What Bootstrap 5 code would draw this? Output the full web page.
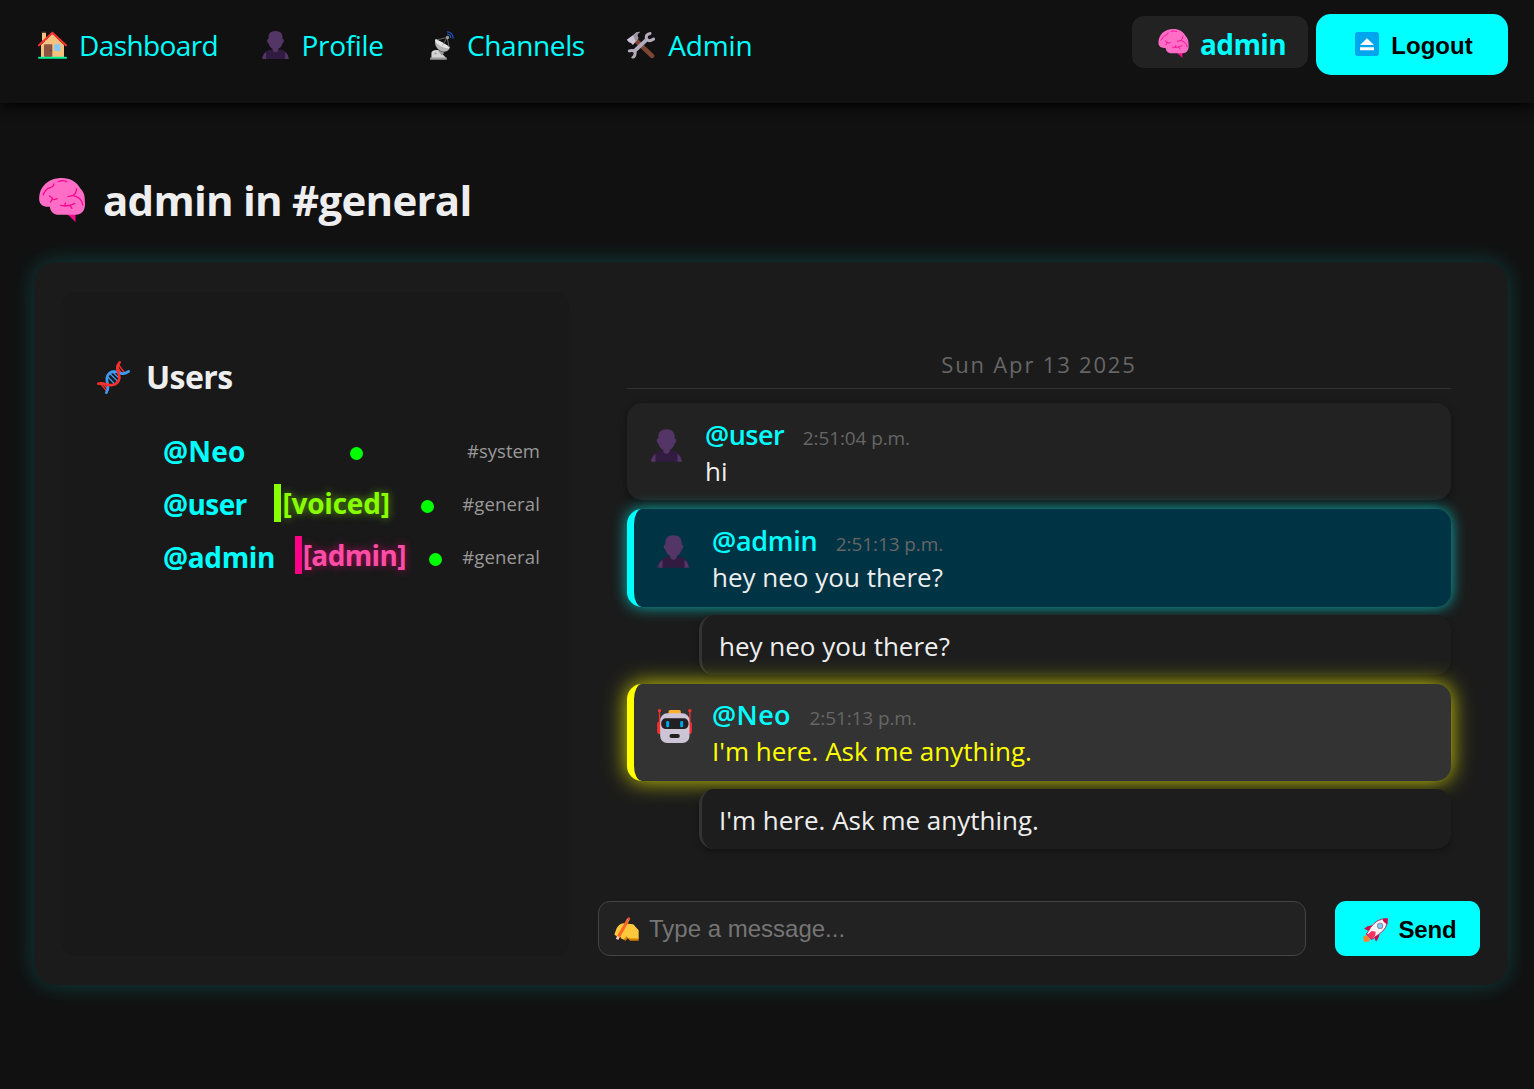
<!DOCTYPE html>
<html lang="en">
<head>
<meta charset="utf-8">
<title>#general</title>
<meta name="viewport" content="width=device-width, initial-scale=1">
<link href="https://cdn.jsdelivr.net/npm/bootstrap@5.3.0/dist/css/bootstrap.min.css" rel="stylesheet">
<style>
body{background:#111;color:#eee;font-family:"Open Sans","Noto Sans",sans-serif;min-height:1089px;overflow-x:hidden}
svg{display:block;flex:none;overflow:visible}
.topbar{height:103px;padding:14px 26px 0 38px;background:#111;box-shadow:0 3px 12px #000;position:relative}
.topnav{gap:42.5px;padding-top:11px}
.topnav a{color:#0ff;font-size:28px;line-height:40px;text-decoration:none;display:flex;white-space:nowrap}
.ico-slot{width:41px;flex:none;display:flex;padding-top:5.5px}
.t-dash{letter-spacing:-.6px}.t-prof{letter-spacing:-.36px}.t-chan{letter-spacing:-.38px}.t-adm{letter-spacing:-.16px}
.who{width:176px;height:52px;margin-top:2px;background:#222;border-radius:12px;padding:3px 0 0 26px;color:#0ff;font-weight:700;font-size:28px;letter-spacing:-.6px}
.who span{margin-left:11px}
.btn-cyan,.btn-cyan:hover{background:#0ff;color:#000;border:0;font:700 24px/28px "Liberation Sans",sans-serif;padding:2px 0 0 4px}
.btn-out{width:192px;height:61px;border-radius:15px}
.btn-send{width:145px;height:55px;border-radius:11px}
.btn-send span{margin-left:11px;letter-spacing:-.17px}
.room-title{font-size:42px;font-weight:700;line-height:60px;margin:66.500px 0 0;padding-left:39px;height:92.500px;letter-spacing:-.75px}
.room-title span{margin-left:18px}
.shell{margin:0 26px 0 34px;height:723px;background:#1b1b1b;border-radius:22px;padding:30px 28px 29px;box-shadow:0 0 22px rgba(0,255,255,.2)}
.people{width:507px;background:#191919;border-radius:15px;padding:59px 29px 0 35px}
.people h2{font-size:32px;line-height:52px;font-weight:700;margin:0 0 22px;letter-spacing:-.6px}
.person{height:52.7px;padding-left:66px;line-height:52px;font-size:28px;font-weight:700;color:#0ff}
.n-neo{letter-spacing:.2px}.n-user{letter-spacing:-.6px}.n-admin{letter-spacing:-.35px}
.dot{width:13px;height:13px;border-radius:50%;background:#0f0;margin-top:5px}
.chan{font-size:18.5px;font-weight:400;color:#999;letter-spacing:.15px}
.chan-sys{letter-spacing:0}
.role{line-height:38px;border-left:7px solid;padding-left:1px;margin:0 4px 3px 0}
.role-v{color:#8f0;border-color:#8f0;text-shadow:0 0 8px rgba(136,255,0,.6);letter-spacing:-.2px}
.role-a{color:#ff4da6;border-color:#f08;text-shadow:0 0 8px rgba(255,0,136,.6);letter-spacing:-.65px}
.chat{margin-left:29px;width:882px}
.feed{padding:51px 29px 0;height:609px}
.day{font-size:22px;line-height:42px;height:46px;text-align:center;color:#666;border-bottom:1px solid #333;margin-bottom:14px;letter-spacing:1.82px}
.msg{height:97px;border-radius:15px;background:#222;box-shadow:0 3px 8px rgba(0,0,0,.4);margin-bottom:9px;padding:13px 0 0 24px;font-size:26px}
.msg-me{background:#034;border-left:7px solid #0ff;box-shadow:0 0 15px #0ffa;height:98px;margin-bottom:8px}
.msg-bot{background:#333;border-left:7px solid #ff0;box-shadow:0 0 22px #ff0c;margin-bottom:8px;padding:12px 0 0 23px}
.msg-bot .said{color:#ff0}
.nick{color:#0ff;font-weight:600;font-size:27px;letter-spacing:-.5px}
.msg-me .nick{letter-spacing:-.3px}
.msg-bot .nick{letter-spacing:.4px}
.msg .av{width:54px;padding-top:13px;flex:none}
.msg-bot .av{width:55px}
.line{line-height:37px;height:37px;white-space:nowrap}
.time{font-size:19px;color:#666;margin-left:18.5px;letter-spacing:-.1px}
.echo{margin:0 0 9px 72px;height:60px;border-left:3px solid #333;border-radius:15px;background:#1d1d1d;box-shadow:0 3px 6px rgba(0,0,0,.3);padding:0 0 0 17px;font-size:26px;line-height:62px}
.compose{width:708px;height:55px;border:1px solid #444;border-radius:12px;background:#222;padding-left:15px}
.compose input{background:none;border:0;outline:0;color:#eee;font:24px "Liberation Sans",sans-serif;flex:1;padding:0;margin-left:10px}
.compose input::placeholder{color:#757575;opacity:1}
</style>
</head>
<body>
<svg width="0" height="0" class="position-absolute">
<symbol id="house" viewBox="0 0 87 82"><path fill="#f4c27f" d="M12 4h12v24H12zM43 7l35 34v37H9V41z"/><path fill="#5b4233" d="M11 1h13v4H11z"/><path fill="none" stroke="#f8312f" stroke-width="6" stroke-linecap="round" stroke-linejoin="round" d="M3 42L43 4l41 38"/><rect x="18" y="39" width="25" height="38" rx="3" fill="#8c5543"/><circle cx="38" cy="57" r="2" fill="#4a2a20"/><rect x="49" y="39" width="18" height="20" rx="2" fill="#83cbff"/><rect y="76" width="87" height="6" rx="3" fill="#00f397"/></symbol>
<symbol id="bust" viewBox="0 0 76 80"><path fill="#321b41" d="M0 80C2 62 12 54 28 53h20c16 1 26 9 28 27z"/><path fill="#533566" d="M0 80c1-9 5-16 11-20v20zM76 80c-1-9-5-16-11-20v20zM38 0C24 0 18 8 18 18v5c-6 0-5 10 0 12 2 8 6 13 12 16v3q2 7 8 7t8-7v-3c6-3 10-8 12-16 5-2 6-12 0-12v-5C58 8 52 0 38 0z"/></symbol>
<symbol id="dish" viewBox="0 0 70 85"><path fill="#d3d3d3" d="M4 80V64q3-8 13-8h8l23 24z"/><path fill="#999" d="M0 78h49v6H0zM22 56l20 8-8 8z"/><circle cx="16" cy="66" r="3" fill="#999"/><path fill="#b4b4b4" d="M17 23c-6 14 0 28 13 35 12 6 24 1 28-9z"/><path fill="#e6e6e6" d="M15 25c8 1 40 17 43 24-2 3-13 3-27-5-12-7-18-14-16-19z"/><path fill="none" stroke="#888" stroke-width="2" d="M20 26l30-7-14 24M50 19l6 29"/><circle cx="51" cy="19" r="5" fill="#999"/><path fill="none" stroke="#1a5fd0" stroke-width="3" d="M50 9q10 1 11 12M49 2q18 1 19 21"/></symbol>
<symbol id="tools" viewBox="0 0 87 82"><path stroke="#7d4533" stroke-width="14" stroke-linecap="round" d="M30 28l48 46"/><path fill="#cdc4d6" d="M1 25L24 8q7-8 18-7-9 6-9 12l4 7-17 21-5-5-7-3z"/><path fill="#9b93a5" d="M20 12l4-4q7-8 18-7-9 6-9 12l4 7-8 10z"/><path stroke="#b4acbc" stroke-width="12" d="M66 21L22 62"/><path fill="none" stroke="#b4acbc" stroke-width="9" stroke-linecap="round" d="M72 6q-14 3-11 15 5 13 22 2M9 59q15-4 18 6-1 11-7 14"/></symbol>
<symbol id="brain" viewBox="0 0 137 132"><path fill="#f70a8d" d="M84 108l25 24v-27z"/><path fill="#ff6dc6" d="M68 0c25 0 45 12 55 31 12 13 14 22 14 39 3 24-6 40-27 40H58c-13 0-24-8-26-24C13 88 0 80 0 63 0 25 28 0 68 0z"/><g fill="none" stroke="#f70a8d" stroke-width="4" stroke-linecap="round"><path d="M12 51q7-18 20-22 11-2 12-11M58 11q12-6 24 0M112 33q-1 15-11 19l-15 4M101 53q25 3 30 28M31 54l8 6q1 9 15 2M39 60q0 8-5 12M64 82l14 2 18-3 11-5M76 83l3-8M92 82l6 9"/></g></symbol>
<symbol id="eject" viewBox="0 0 24 24"><rect width="24" height="24" rx="3" fill="#00a6ed"/><path fill="#fff" d="M12 6.300l7 6.700H5zM5 15.300h14v3H5z"/></symbol>
<symbol id="dna" viewBox="0 0 99 99"><g fill="none" stroke-linecap="round" stroke-width="4"><path stroke="#f8312f" d="M17 69l14 13M10 68l19 22M65 12l18 24M63 20l12 20"/><path stroke="#3f9bf4" d="M33 48l20 21M39 38l25 25M47 33l21 20"/></g><g fill="none" stroke-linecap="round" stroke-width="8"><path stroke="#3f9bf4" d="M28 95C42 74 24 65 31 46c8-18 26-16 38-10 12 6 19 0 26-5"/><path stroke="#f8312f" d="M4 68c19-5 26 8 42 4 18-3 25-19 19-34-6-14-6-25 3-34"/></g></symbol>
<symbol id="robot" viewBox="0 0 104 102"><g fill="#f8312f"><circle cx="7" cy="5" r="5"/><circle cx="98" cy="5" r="5"/><path d="M5 5h4v40H5zM96 5h4v40h-4z"/><rect y="38" width="15" height="37" rx="6"/><rect x="89" y="38" width="15" height="37" rx="6"/></g><rect x="34" y="3" width="37" height="20" rx="5" fill="#ffb02e"/><rect x="9" y="13" width="88" height="89" rx="21" fill="#cdc4d6"/><rect x="12" y="28" width="82" height="32" rx="14" fill="#212121"/><rect x="27" y="36" width="9" height="19" rx="4" fill="#00a6ed"/><rect x="69" y="36" width="9" height="19" rx="4" fill="#00a6ed"/><rect x="37" y="75" width="31" height="12" rx="6" fill="#212121"/></symbol>
<symbol id="hand" viewBox="0 0 73 70"><path fill="#d67d00" d="M20 55l6 11 8 3 6-7 7 7h25V60z"/><path fill="#ffc83d" d="M1 51L8 32q8-14 22-14l12 2 14 1 16 18v24H48q-8-1-12-7-2 6-9 9-7-1-8-7l-8 1z"/><path stroke="#ff6723" stroke-width="9" d="M13 58L40 10"/><path stroke="#ffc9b8" stroke-width="8" d="M9 65l4-8M40 10l2-4"/><path stroke="#e34b35" stroke-width="9" stroke-linecap="round" d="M43 5v0"/></symbol>
<symbol id="rocket" viewBox="0 0 73 70"><path fill="#ca0b4a" d="M3 31q10-10 24-9l-6 18zM30 50l18-9q2 13-10 28zM14 42l18 17-7 5L8 47z"/><path fill="#ff822d" d="M1 54q6-5 13-1l5 6q2 5-2 10H2z"/><path fill="#f4f4f4" stroke="#ca0b4a" stroke-width="2.500" d="M71 2Q41 0 22 28L11 46l15 15 20-13Q73 30 71 2z"/><path fill="#ca0b4a" d="M72 1L57 3q2 11 14 15z"/><path fill="#f8315f" d="M11 50l14-12 12 2-1 10-11 12z"/><circle cx="50" cy="23" r="7.500" fill="#83cbff" stroke="#8e8ba0" stroke-width="3"/></symbol>
</svg>

<header class="topbar d-flex justify-content-between align-items-start">
<nav class="topnav d-flex">
<a href="#"><span class="ico-slot"><svg width="29" height="28"><use href="#house"/></svg></span><span class="t-dash">Dashboard</span></a>
<a href="#"><span class="ico-slot"><svg width="29" height="28"><use href="#bust"/></svg></span><span class="t-prof">Profile</span></a>
<a href="#"><span class="ico-slot"><svg width="32" height="29"><use href="#dish"/></svg></span><span class="t-chan">Channels</span></a>
<a href="#"><span class="ico-slot"><svg width="27" height="28" viewBox="2 0 82 82"><use href="#tools" width="87" height="82"/></svg></span><span class="t-adm">Admin</span></a>
</nav>
<div class="d-flex gap-2 align-items-start">
<div class="who d-flex align-items-center"><svg width="31" height="29"><use href="#brain"/></svg><span>admin</span></div>
<button class="btn btn-cyan btn-out d-flex align-items-center justify-content-center gap-2"><svg class="mb-1" width="24" height="24"><use href="#eject"/></svg><span class="ms-1">Logout</span></button>
</div>
</header>

<main>
<h1 class="room-title d-flex"><svg class="mt-2" width="46" height="44"><use href="#brain"/></svg><span>admin in #general</span></h1>
<section class="shell d-flex">
<aside class="people">
<h2 class="d-flex align-items-center"><svg width="33" height="33"><use href="#dna"/></svg><span class="ms-3">Users</span></h2>
<div class="person d-flex justify-content-between align-items-center"><span class="n-neo">@Neo</span><i class="dot"></i><span class="chan chan-sys">#system</span></div>
<div class="person d-flex justify-content-between align-items-center"><span class="n-user">@user</span><span class="role role-v">[voiced]</span><i class="dot"></i><span class="chan">#general</span></div>
<div class="person d-flex justify-content-between align-items-center"><span class="n-admin">@admin</span><span class="role role-a">[admin]</span><i class="dot"></i><span class="chan">#general</span></div>
</aside>
<div class="chat">
<div class="feed">
<div class="day">Sun Apr 13 2025</div>
<div class="msg d-flex"><div class="av"><svg width="31" height="33"><use href="#bust"/></svg></div><div><div class="line"><span class="nick">@user</span><span class="time">2:51:04 p.m.</span></div><div class="line said">hi</div></div></div>
<div class="msg msg-me d-flex"><div class="av"><svg width="31" height="33"><use href="#bust"/></svg></div><div><div class="line"><span class="nick">@admin</span><span class="time">2:51:13 p.m.</span></div><div class="line said">hey neo you there?</div></div></div>
<div class="echo">hey neo you there?</div>
<div class="msg msg-bot d-flex"><div class="av"><svg width="35" height="34"><use href="#robot"/></svg></div><div><div class="line"><span class="nick">@Neo</span><span class="time">2:51:13 p.m.</span></div><div class="line said">I'm here. Ask me anything.</div></div></div>
<div class="echo">I'm here. Ask me anything.</div>
</div>
<div class="d-flex justify-content-between">
<div class="compose d-flex align-items-center"><svg width="25" height="24"><use href="#hand"/></svg><input placeholder="Type a message..."></div>
<button class="btn btn-cyan btn-send d-flex align-items-center justify-content-center"><svg width="25" height="24"><use href="#rocket"/></svg><span>Send</span></button>
</div>
</div>
</section>
</main>
<script src="https://cdn.jsdelivr.net/npm/bootstrap@5.3.0/dist/js/bootstrap.bundle.min.js"></script>
</body>
</html>
